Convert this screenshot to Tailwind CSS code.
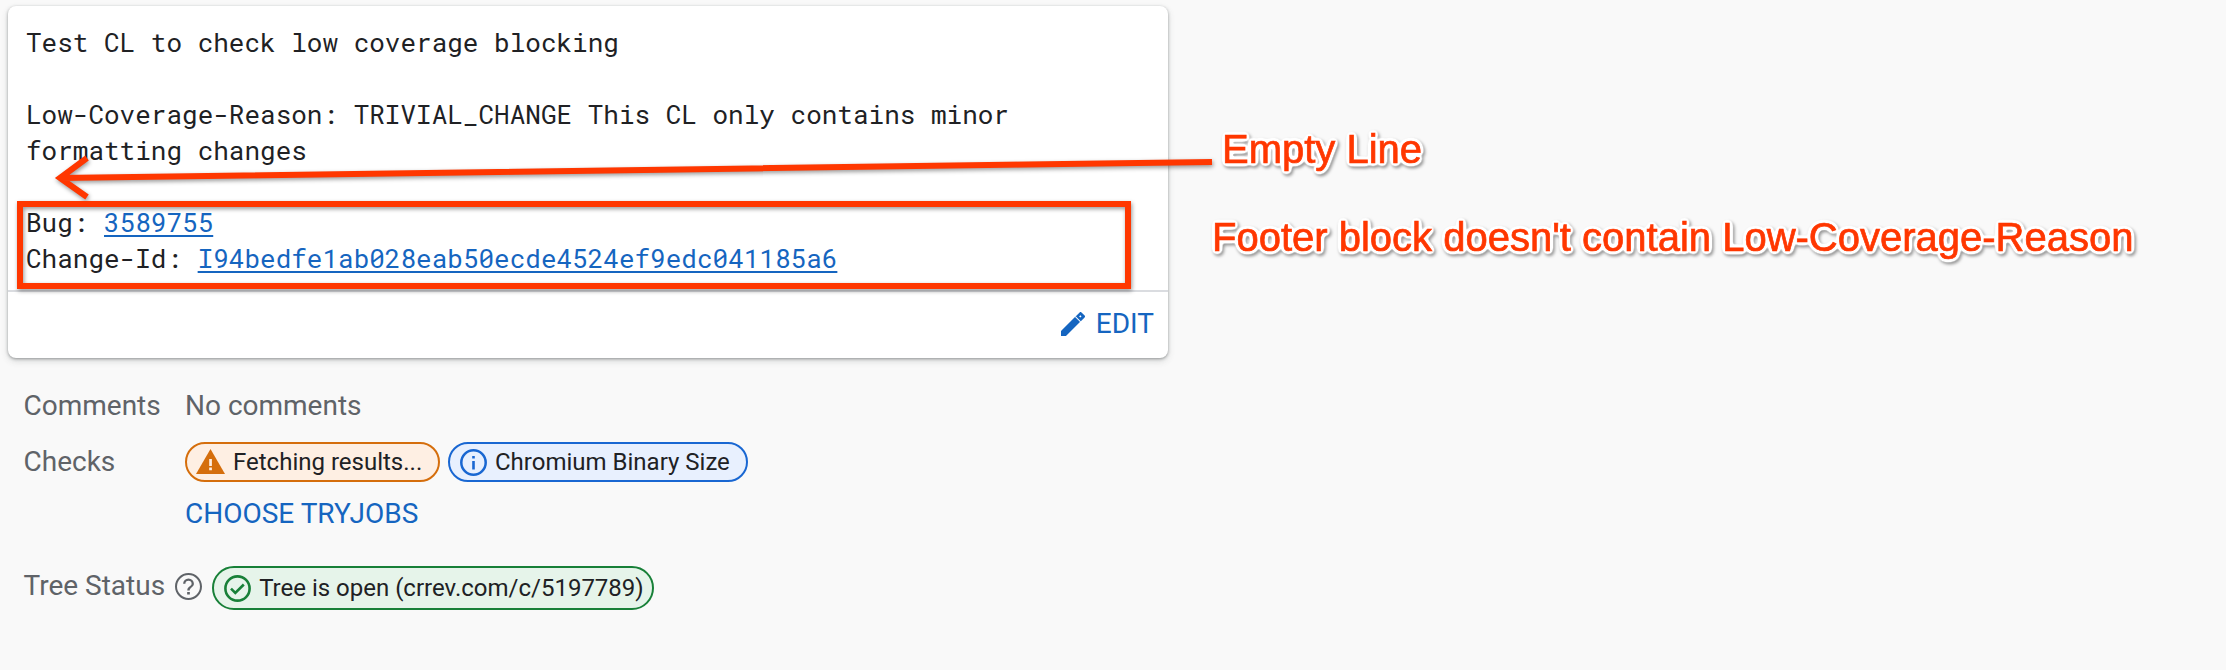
<!DOCTYPE html>
<html lang="en">
<head>
<meta charset="utf-8">
<title>Change details</title>
<script src="https://cdn.jsdelivr.net/npm/@tailwindcss/browser@4"></script>
</head>
<body class="relative h-[670px] w-[2226px] overflow-hidden bg-[#f9f9f9] font-['Roboto',sans-serif] text-[28px] text-[#5f6368]">
  <main class="pl-2 pt-1.5">
    <section class="flex h-[352px] w-[1160px] flex-col rounded-lg bg-white shadow-[0_1px_3px_rgba(60,64,67,0.45),0_3px_7px_rgba(60,64,67,0.18)]">
      <div class="h-[286px] border-b-2 border-[#dadce0] pl-[18px] pt-[18px]">
        <pre class="font-['Roboto_Mono','DejaVu_Sans_Mono',monospace] text-[26px] leading-[36px] text-[#202124]">Test CL to check low coverage blocking

Low-Coverage-Reason: TRIVIAL_CHANGE This CL only contains minor
formatting changes

Bug: <a class="text-[#1565c0] underline decoration-2 underline-offset-[3px]">3589755</a>
Change-Id: <a class="text-[#1565c0] underline decoration-2 underline-offset-[3px]">I94bedfe1ab028eab50ecde4524ef9edc041185a6</a></pre>
      </div>
      <div class="flex h-[64px] items-center justify-end gap-[11px] pr-[14px] text-[#1565c0]">
        <svg class="size-[24px]" viewBox="3 3 18 18" fill="currentColor"><path d="M3 17.25V21h3.75L17.81 9.94l-3.75-3.75L3 17.25zM20.71 7.04a1 1 0 0 0 0-1.41l-2.34-2.34a1 1 0 0 0-1.41 0l-3.4 3.4 3.75 3.75 3.4-3.4zM16.6 6.3l.9-.9.9.9-.9.9z" fill-rule="evenodd"/></svg>
        <span class="leading-8">EDIT</span>
      </div>
    </section>
    <section class="grid grid-cols-[161.5px_auto] pl-[15.5px] pt-8 leading-8">
      <div>Comments</div>
      <div>No comments</div>
      <div class="pt-6">Checks</div>
      <div class="pt-5">
        <div class="flex gap-2 text-2xl leading-8 text-[#202124]">
          <div class="flex h-10 w-[255px] items-center rounded-full border-2 border-[#d56e0c] bg-[#feefe3] pl-[9px]">
            <svg class="mr-2 h-[26px] w-[29px]" viewBox="0 0 29 26"><path d="M14.5 0 29 25H0Z" fill="#d56e0c"/><path d="M13.2 10h2.7v7h-2.7zM13.2 18.6h2.7v2.7h-2.7z" fill="#feefe3"/></svg>
            <span>Fetching results...</span>
          </div>
          <div class="flex h-10 w-[300px] items-center rounded-full border-2 border-[#1967d2] bg-[#e8f0fe] pl-[10px]">
            <svg class="mr-2 size-[27px]" viewBox="0 0 27 27"><circle cx="13.5" cy="13.5" r="12.2" fill="none" stroke="#1967d2" stroke-width="2.5"/><path d="M12.2 7h2.6v2.6h-2.6zM12.2 12h2.6v8.4h-2.6z" fill="#1967d2"/></svg>
            <span>Chromium Binary Size</span>
          </div>
        </div>
        <div class="pt-4 text-[#1565c0]">CHOOSE TRYJOBS</div>
      </div>
    </section>
    <section class="flex pl-[15.5px] pt-9">
      <div class="flex h-10 items-center gap-[10px] leading-8">
        <span>Tree Status</span>
        <svg class="mr-[10px] size-[27px]" viewBox="2 2 20 20" fill="currentColor"><path d="M11 18h2v-2h-2v2zm1-16C6.48 2 2 6.48 2 12s4.48 10 10 10 10-4.48 10-10S17.52 2 12 2zm0 18.500a8.500 8.500 0 1 1 0-17 8.500 8.500 0 0 1 0 17zM12 6a4 4 0 0 0-4 4h1.700a2.300 2.300 0 0 1 4.600 0c0 2-3.200 1.750-3.200 5h1.800c0-2.250 3.100-2.500 3.100-5a4 4 0 0 0-4-4z"/></svg>
      </div>
      <div class="flex h-11 w-[442px] items-center rounded-full border-2 border-[#188038] bg-[#e6f4ea] pl-[10px] text-2xl text-[#202124]">
        <svg class="mr-2 size-[27px]" viewBox="0 0 27 27" fill="none" stroke="#188038" stroke-width="2.600"><circle cx="13.500" cy="13.500" r="12.100"/><path d="m7 13.700 4.300 4.300 8.500-8.500"/></svg>
        <span>Tree is open (crrev.com/c/5197789)</span>
      </div>
    </section>
  </main>

  <!-- Annotations drawn over the page -->
  <svg class="absolute left-0 top-0 h-[300px] w-[2226px]" viewBox="0 0 2226 300">
    <defs>
      <!-- Rounded white halo with a soft shadow below -->
      <filter id="halo" filterUnits="userSpaceOnUse" x="1200" y="110" width="960" height="170" color-interpolation-filters="sRGB">
        <feGaussianBlur in="SourceAlpha" stdDeviation="2.2"/>
        <feComponentTransfer result="grown">
          <feFuncR type="linear" slope="0" intercept="1"/>
          <feFuncG type="linear" slope="0" intercept="1"/>
          <feFuncB type="linear" slope="0" intercept="1"/>
          <feFuncA type="linear" slope="12" intercept="-0.35"/>
        </feComponentTransfer>
        <feDropShadow in="grown" dx="1.5" dy="2" stdDeviation="1.500" flood-color="#000" flood-opacity="0.4" result="shaded"/>
        <feMerge><feMergeNode in="shaded"/><feMergeNode in="SourceGraphic"/></feMerge>
      </filter>
    </defs>
    <g class="drop-shadow-[1px_2px_2px_rgba(0,0,0,0.4)]" fill="none" stroke="#ff3700" stroke-width="6">
      <path d="M1212 162 60 178M87 158 60 178 87 197" stroke-miterlimit="10"/>
      <path d="M20 204H1128V286H20Z"/>
    </g>
    <g class="font-['Liberation_Sans',Arial,sans-serif] text-[40px]" fill="#ff3700" stroke="#ff3700" stroke-width="0.7" filter="url(#halo)">
      <text x="1222" y="163">Empty Line</text>
      <text x="1212" y="251">Footer block doesn't contain Low-Coverage-Reason</text>
    </g>
  </svg>
</body>
</html>
